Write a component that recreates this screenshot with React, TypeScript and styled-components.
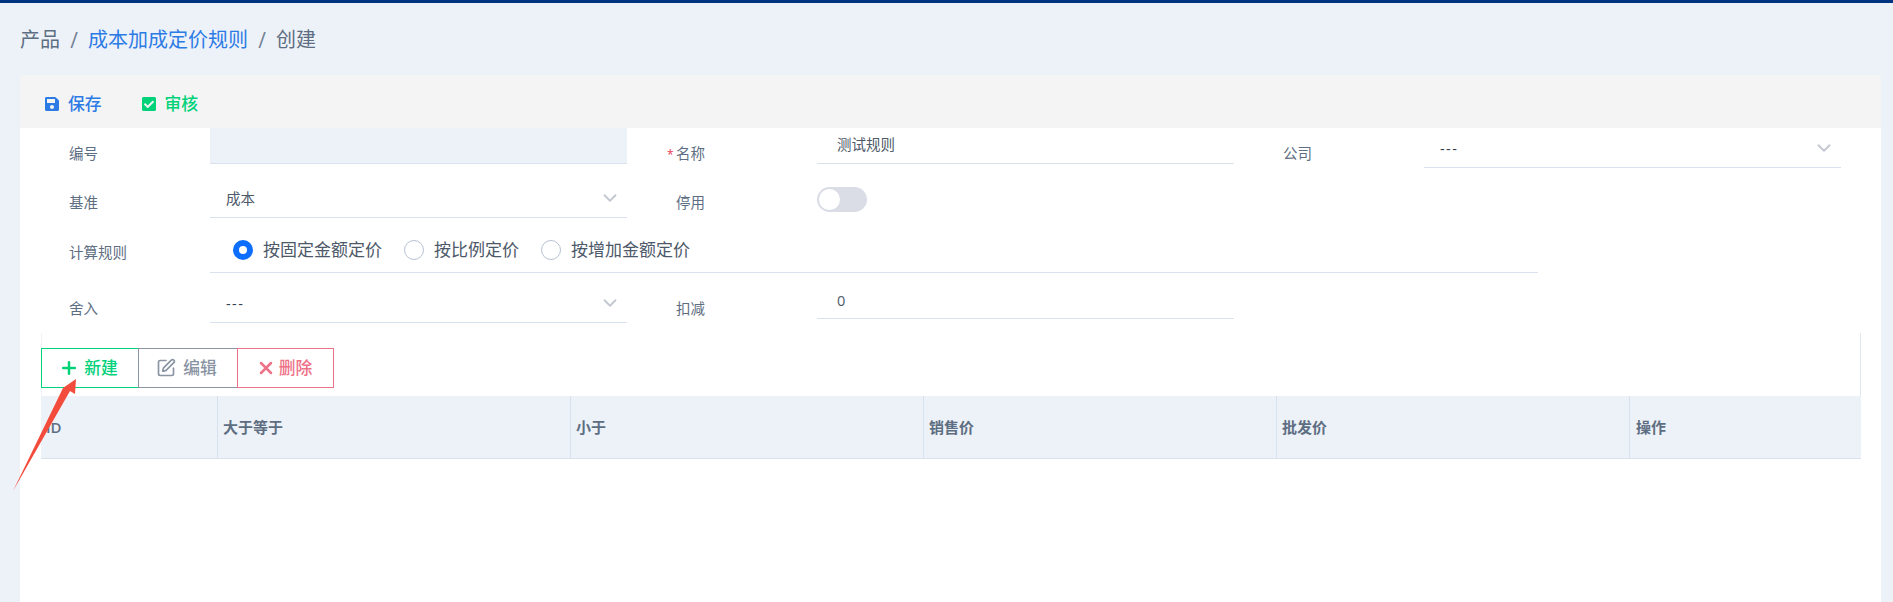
import React from "react";
import styled, { createGlobalStyle } from "styled-components";
import { FaSave, FaCheckSquare } from "react-icons/fa";
import { FiPlus, FiX, FiChevronDown } from "react-icons/fi";
import { SquarePen } from "lucide-react";

const Global = createGlobalStyle`
  html, body { margin: 0; padding: 0; height: 602px; overflow: hidden; background: #edf2f9; }
  body { font-family: "Open Sans", "Noto Sans CJK SC", sans-serif; color: #5e6e82; }
  * { box-sizing: border-box; }
`;

const Page = styled.div`
  position: relative;
  height: 602px;
  overflow: hidden;
  border-top: 3px solid #003380;
`;
const Crumbs = styled.nav`
  display: flex;
  align-items: center;
  height: 72px;
  padding: 2px 0 0 20px;
  font-size: 20px;
  line-height: 28px;
`;
const Crumb = styled.span<{ $link?: boolean }>`
  color: ${(p) => (p.$link ? "#2c7be5" : "#5e6e82")};
`;
const Sep = styled.span`
  color: #748194;
  width: 28px;
  text-align: center;
  font-size: 21px;
`;
const Card = styled.main`
  margin: 0 12px 0 20px;
  height: 527px;
  background: #fff;
`;
const Toolbar = styled.div`
  display: flex;
  align-items: center;
  gap: 39px;
  height: 53px;
  padding: 4px 0 0 24px;
  background: #f4f4f4;
`;
const ToolAction = styled.button<{ $color: string }>`
  display: flex;
  align-items: center;
  gap: 8px;
  padding: 0;
  border: 0;
  background: transparent;
  font: inherit;
  font-size: 16.8px;
  font-weight: 500;
  line-height: 24px;
  color: ${(p) => p.$color};
  svg { width: 16px; height: 16px; }
`;
const Row = styled.div<{ $h: number; $labelTop: number }>`
  display: grid;
  grid-template-columns: 607px 607px 607px;
  height: ${(p) => p.$h}px;
  --label-top: ${(p) => p.$labelTop}px;
`;
const Field = styled.div<{ $span?: number }>`
  display: flex;
  align-items: flex-start;
  padding-left: 49px;
  grid-column: span ${(p) => p.$span ?? 1};
`;
const Label = styled.label`
  position: relative;
  flex: 0 0 141px;
  margin-top: var(--label-top);
  font-size: 14.5px;
  line-height: 22px;
  color: #5e6e82;
`;
const Star = styled.span`
  position: absolute;
  left: -9px;
  top: 1px;
  color: #e63757;
  font-size: 12px;
`;
const Control = styled.div<{ $h: number; $top: number; $left: number; $disabled?: boolean }>`
  display: flex;
  justify-content: space-between;
  flex: 0 0 417px;
  height: ${(p) => p.$h}px;
  padding: ${(p) => p.$top}px 6px 0 ${(p) => p.$left}px;
  border-bottom: 1.5px solid #d8e2ef;
  background: ${(p) => (p.$disabled ? "#edf2f9" : "transparent")};
  font-size: 14.5px;
  line-height: 22px;
  color: #4d5969;
`;
const Chevron = styled(FiChevronDown)`
  width: 22px;
  height: 22px;
  margin-top: -1px;
  color: #c3c7d0;
`;
const Dashes = styled.span`
  letter-spacing: 1.4px;
  color: #344050;
`;
const Toggle = styled.div`
  margin-top: 15px;
  width: 50px;
  height: 25px;
  padding: 2px;
  border-radius: 13px;
  background: #dadde5;
`;
const Knob = styled.div`
  width: 21px;
  height: 21px;
  border-radius: 50%;
  background: #fff;
`;
const RadioGroup = styled.div`
  display: flex;
  align-items: flex-start;
  gap: 22px;
  flex: 0 0 1328px;
  height: 46px;
  padding: 13px 0 0 23px;
  border-bottom: 1.5px solid #d8e2ef;
`;
const RadioItem = styled.span`
  display: flex;
  align-items: center;
  gap: 10px;
  font-size: 17px;
  line-height: 20px;
  color: #4d5969;
`;
const RadioDot = styled.span<{ $on?: boolean }>`
  width: 20px;
  height: 20px;
  border-radius: 50%;
  background: #fff;
  border: ${(p) => (p.$on ? "6px solid #0d6efd" : "1px solid #b6c1d2")};
`;
const Panel = styled.section`
  margin-left: 21px;
  width: 1820px;
  padding-top: 15px;
  border-left: 1px solid #f0f2f6;
  border-right: 1px solid #e2e7ee;
`;
const Buttons = styled.div`
  display: flex;
  height: 40px;
  margin-left: -1px;
`;
const Btn = styled.button<{ $color: string; $w: number; $edge?: string; $gap: number }>`
  display: flex;
  align-items: center;
  justify-content: center;
  gap: ${(p) => p.$gap}px;
  width: ${(p) => p.$w}px;
  padding: 0 3px 0 0;
  margin-right: -1px;
  background: #fff;
  border: 1.5px solid ${(p) => p.$color};
  border-right-color: ${(p) => p.$edge ?? p.$color};
  color: ${(p) => p.$color};
  font: inherit;
  font-size: 16.8px;
  font-weight: 500;
  line-height: 24px;
  svg { width: 20px; height: 20px; }
`;
const TableHead = styled.div`
  display: grid;
  grid-template-columns: 177px 353px 353px 353px 353px 1fr;
  height: 63px;
  margin-top: 8px;
  margin-left: -1px;
  margin-right: -1px;
  background: #edf2f9;
  border-bottom: 1.5px solid #d8e2ef;
`;
const Th = styled.div`
  display: flex;
  align-items: center;
  padding: 0 0 1px 5px;
  font-size: 15px;
  font-weight: 600;
  color: #5e6e82;
  border-right: 1px solid #d8e2ef;
  &:last-child { border-right: 0; padding-left: 6px; }
`;
const Arrow = styled.svg`
  position: absolute;
  left: 0;
  top: -3px;
  width: 100px;
  height: 520px;
  pointer-events: none;
`;
const PlusIcon = styled(FiPlus)`
  stroke-width: 3;
`;
const XIcon = styled(FiX)`
  stroke-width: 3;
`;

export default function App() {
  return (
    <Page>
      <Global />
      <Crumbs>
        <Crumb>产品</Crumb>
        <Sep>/</Sep>
        <Crumb $link>成本加成定价规则</Crumb>
        <Sep>/</Sep>
        <Crumb>创建</Crumb>
      </Crumbs>
      <Card>
        <Toolbar>
          <ToolAction $color="#2c7be5"><FaSave />保存</ToolAction>
          <ToolAction $color="#00d27a"><FaCheckSquare />审核</ToolAction>
        </Toolbar>
        <Row $h={44} $labelTop={15}>
          <Field><Label>编号</Label><Control $h={36} $top={6} $left={16} $disabled /></Field>
          <Field><Label><Star>*</Star>名称</Label><Control $h={36} $top={6} $left={20}>测试规则</Control></Field>
          <Field><Label>公司</Label><Control $h={40} $top={10} $left={16}><Dashes>---</Dashes><Chevron /></Control></Field>
        </Row>
        <Row $h={55} $labelTop={20}>
          <Field><Label>基准</Label><Control $h={46} $top={16} $left={16}>成本<Chevron /></Control></Field>
          <Field><Label>停用</Label><Toggle><Knob /></Toggle></Field>
        </Row>
        <Row $h={46} $labelTop={15}>
          <Field $span={3}>
            <Label>计算规则</Label>
            <RadioGroup>
              <RadioItem><RadioDot $on />按固定金额定价</RadioItem>
              <RadioItem><RadioDot />按比例定价</RadioItem>
              <RadioItem><RadioDot />按增加金额定价</RadioItem>
            </RadioGroup>
          </Field>
        </Row>
        <Row $h={60} $labelTop={25}>
          <Field><Label>舍入</Label><Control $h={50} $top={20} $left={16}><Dashes>---</Dashes><Chevron /></Control></Field>
          <Field><Label>扣减</Label><Control $h={46} $top={17} $left={20}>0</Control></Field>
        </Row>
        <Panel>
          <Buttons>
            <Btn $color="#00d27a" $w={98} $edge="#1f8f74" $gap={5}><PlusIcon />新建</Btn>
            <Btn $color="#8a94a3" $w={100} $edge="#9a8a9a" $gap={7}><SquarePen strokeWidth={2} />编辑</Btn>
            <Btn $color="#ee7288" $w={97} $gap={3}><XIcon />删除</Btn>
          </Buttons>
          <TableHead>
            <Th>ID</Th>
            <Th>大于等于</Th>
            <Th>小于</Th>
            <Th>销售价</Th>
            <Th>批发价</Th>
            <Th>操作</Th>
          </TableHead>
        </Panel>
      </Card>
      <Arrow viewBox="0 0 100 520">
        <polygon points="76,379 75,394 70,391 13,491 63,388" fill="#f34c3c" />
      </Arrow>
    </Page>
  );
}
